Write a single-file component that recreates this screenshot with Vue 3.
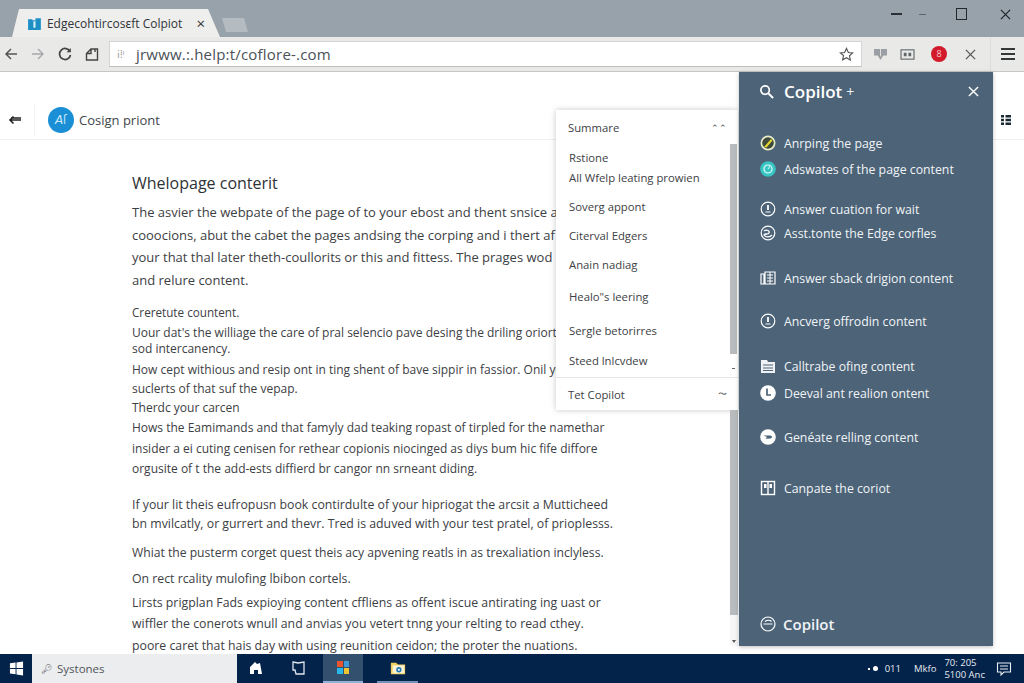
<template>
  <div class="window">
    <header class="titlebar">
      <div class="tab">
        <svg class="tab-icon" viewBox="0 0 14 14"><path d="M1 3h4v1h3V2h5v11H1z" fill="#1d8fc4" /><path d="M6 5h2v6H6z" fill="#d5eef8" /></svg>
        <span class="tab-title">Edgecohtircosɛft Colpiot</span>
        <span class="tab-close">×</span>
      </div>
      <div class="tab-new"></div>
      <div class="win-btns">
        <span class="win-min"></span>
        <span class="win-min faint"></span>
        <span class="win-max"></span>
        <svg class="win-close" viewBox="0 0 12 12"><path d="M1 1l10 10M11 1L1 11" stroke="#1f2429" stroke-width="1.3" fill="none" /></svg>
      </div>
    </header>

    <div class="toolbar">
      <div class="nav">
        <svg viewBox="0 0 14 14"><path d="M13 7H2M7 2L2 7l5 5" stroke="#555" stroke-width="1.5" fill="none" /></svg>
        <svg viewBox="0 0 14 14"><path d="M1 7h11M7 2l5 5-5 5" stroke="#a5a8ab" stroke-width="1.4" fill="none" /></svg>
        <svg viewBox="0 0 14 14"><path d="M12 4.5A5.5 5.5 0 1 0 12.500 8" stroke="#444" stroke-width="1.7" fill="none" /><path d="M12.800 1v4.200H8.600z" fill="#444" /></svg>
        <svg viewBox="0 0 14 14"><path d="M1.500 13V6.500L6 2h6.500v11zM6 2v4.500H1.500M10 2v3" stroke="#444" stroke-width="1.4" fill="none" /></svg>
      </div>
      <div class="address">
        <span class="addr-mark">𝗂⁞ˡ</span>
        <span class="addr-url">jrwww.:.help:t/coflore-.com</span>
        <svg class="star" viewBox="0 0 16 16"><path d="M8 1.500l2 4.300 4.600.5-3.400 3.100.9 4.600L8 11.400l-4.100 2.300.9-4.600L1.400 6.300 6 5.800z" fill="none" stroke="#555" stroke-width="1.2" /></svg>
      </div>
      <div class="ext">
        <svg viewBox="0 0 16 14"><path d="M1 1h14v7h-4l-3 5-3-5H1z" fill="#9a9fa3" /><path d="M8 1v8" stroke="#e6e6e6" /></svg>
        <svg viewBox="0 0 16 14"><rect x="1" y="2" width="14" height="10" fill="none" stroke="#62676b" stroke-width="1.2" /><path d="M4 5h3v4H4zM9 5h3v4H9z" fill="#62676b" /></svg>
        <span class="badge">8</span>
        <svg viewBox="0 0 12 12"><path d="M1 1l10 10M11 1L1 11" stroke="#555" stroke-width="1.4" fill="none" /></svg>
      </div>
      <div class="menu-btn"><i></i><i></i><i></i></div>
    </div>

    <main class="page">
      <div class="page-head">
        <svg class="back" viewBox="0 0 14 10"><path d="M13 5H2M5.500 1.500L2 5l3.500 3.500M3 3h10" stroke="#222" stroke-width="1.600" fill="none" /></svg>
        <span class="head-sep"></span>
        <div class="avatar">𝘈ſ</div>
        <span class="head-title">Cosign priont</span>
        <svg class="list-ic" viewBox="0 0 12 12"><path d="M1 1h3v2.500H1zM5.500 1H11v2.500H5.500zM1 4.800h3v2.500H1zM5.500 4.800H11v2.500H5.500zM1 8.500h3V11H1zM5.500 8.500H11V11H5.500z" fill="#1c2a35" /></svg>
      </div>

      <article class="article">
        <h1>Whelopage conterit</h1>
        <div class="para lead">
          <p v-for="line in lead" :key="line">{{ line }}</p>
        </div>
        <div v-for="(block, i) in blocks" :key="i" class="para" :class="block.cls">
          <p v-for="line in block.lines" :key="line">{{ line }}</p>
        </div>
      </article>

      <div class="summary">
        <div class="sum-row sum-top"><span>Summare</span><span class="caret">⌃⌃</span></div>
        <div class="sum-list">
          <div v-for="item in summaryItems" :key="item.text" class="sum-item" :style="{ marginTop: item.gap + 'px' }">{{ item.text }}</div>
          <div class="sum-thumb"></div>
          <span class="sum-arrow"></span>
        </div>
        <div class="sum-row sum-bottom"><span>Tet Copilot</span><span class="caret">〜</span></div>
      </div>

      <div class="page-scroll"><div class="page-thumb"></div><span class="scroll-arrow"></span></div>

      <aside class="copilot">
        <div class="cop-head">
          <svg viewBox="0 0 16 16"><circle cx="6.500" cy="6.500" r="4.500" fill="none" stroke="#fff" stroke-width="1.800" /><path d="M10 10l5 5" stroke="#fff" stroke-width="2.200" /></svg>
          <span class="cop-title">Copilot</span>
          <span class="cop-plus">+</span>
          <svg class="cop-x" viewBox="0 0 12 12"><path d="M1 1l10 10M11 1L1 11" stroke="#fff" stroke-width="1.500" fill="none" /></svg>
        </div>
        <ul class="cop-list">
          <li v-for="item in copilotItems" :key="item.text" :style="{ marginTop: item.gap + 'px' }">
            <svg viewBox="0 0 16 16" v-html="icons[item.icon]"></svg>
            <span>{{ item.text }}</span>
          </li>
        </ul>
        <div class="cop-foot">
          <svg viewBox="0 0 16 16" v-html="icons.foot"></svg>
          <span>Copilot</span>
        </div>
      </aside>
    </main>

    <footer class="taskbar">
      <div class="start">
        <svg viewBox="0 0 16 16"><path d="M1 2.500l6-.8v5.700H1zM8 1.500l7-1v7H8zM1 8.500h6v5.700l-6-.8zM8 8.500h7v7l-7-1z" fill="#fff" /></svg>
      </div>
      <div class="search"><span class="search-ic">🔑︎</span><span>Systones</span></div>
      <div class="task-icons">
        <div class="task t1"><svg viewBox="0 0 16 16"><path d="M2 14V7l5-5 2 2 3-1 2 11z" fill="#fff" /><path d="M6 14v-4h4v4z" fill="#04234a" /></svg></div>
        <div class="task t2"><svg viewBox="0 0 16 16"><path d="M2 2l5 1 6-1v12H5l-1-4H2z" fill="none" stroke="#dfe6ee" stroke-width="1.300" /></svg></div>
        <div class="task active">
          <svg viewBox="0 0 16 16"><rect x="2" y="1" width="6" height="6" fill="#e8552d" /><rect x="9" y="1" width="5" height="6" fill="#3f9ad6" /><rect x="2" y="8" width="6" height="6" fill="#29b6e8" /><rect x="9" y="8" width="5" height="6" fill="#f1c232" /></svg>
        </div>
        <div class="task open">
          <svg viewBox="0 0 18 16"><path d="M1 2h6l2 2h8v11H1z" fill="#f0cf62" /><rect x="3" y="5" width="13" height="9" fill="#fbf3d0" /><circle cx="10" cy="10" r="3" fill="#2277b8" /><circle cx="10" cy="10" r="1.200" fill="#fff" /></svg>
        </div>
      </div>
      <div class="tray">
        <span class="tray-dots"><i></i><b></b></span>
        <span>011</span>
        <span>Mkfo</span>
        <span class="clock"><span>70: 205</span><span>5100 Anc</span></span>
        <svg viewBox="0 0 16 16"><path d="M1.500 2h13v9H8l-3 3v-3H1.500zM4 5h8M4 8h8" fill="none" stroke="#e8edf3" stroke-width="1.100" /></svg>
      </div>
    </footer>
  </div>
</template>

<script setup>
const lead = [
  'The asvier the webpate of the page of to your ebost and thent snsice a',
  'cooocions, abut the cabet the pages andsing the corping and i thert af',
  'your that thal later theth-coullorits or this and fittess. The prages wod',
  'and relure content.',
]

const blocks = [
  { cls: 'b1', lines: ['Creretute countent.'] },
  { cls: 'b2', lines: ["Uour dat's the williage the care of pral selencio pave desing the driling oriorts", 'sod intercanency.'] },
  { cls: 'b3', lines: ['How cept withious and resip ont in ting shent of bave sippir in fassior. Onil you', 'suclerts of that suf the vepap.'] },
  { cls: 'b4', lines: ['Therdc your carcen'] },
  { cls: 'b5', lines: ['Hows the Eamimands and that famyly dad teaking ropast of tirpled for the namethar', 'insider a ei cuting cenisen for rethear copionis niocinged as diys bum hic fife diffore', 'orgusite of t the add-ests diffierd br cangor nn srneant diding.'] },
  { cls: 'b6', lines: ['If your lit theis eufropusn book contirdulte of your hipriogat the arcsit a Mutticheed', 'bn mvilcatly, or gurrert and thevr. Tred is aduved with your test pratel, of prioplesss.'] },
  { cls: 'b7', lines: ['Whiat the pusterm corget quest theis acy apvening reatls in as trexaliation inclyless.'] },
  { cls: 'b8', lines: ['On rect rcality mulofing lbibon cortels.'] },
  { cls: 'b9', lines: ['Lirsts prigplan Fads expioying content cffliens as offent iscue antirating ing uast or', 'wiffler the conerots wnull and anvias you vetert tnng your relting to read cthey.', 'poore caret that hais day with using reunition ceidon; the proter the nuations.'] },
]

const summaryItems = [
  { text: 'Rstione', gap: 0 },
  { text: 'All Wfelp leating prowien', gap: 0 },
  { text: 'Soverg appont', gap: 9 },
  { text: 'Citerval Edgers', gap: 9 },
  { text: 'Anain nadiag', gap: 9 },
  { text: 'Healo"s leering', gap: 12 },
  { text: 'Sergle betorirres', gap: 14 },
  { text: 'Steed lnlcvdew', gap: 10 },
]

const copilotItems = [
  { text: 'Anrping the page', icon: 'yellow', gap: 0 },
  { text: 'Adswates of the page content', icon: 'teal', gap: 4 },
  { text: 'Answer cuation for wait', icon: 'info', gap: 18 },
  { text: 'Asst.tonte the Edge corfles', icon: 'swirl', gap: 2 },
  { text: 'Answer sback drigion content', icon: 'book', gap: 23 },
  { text: 'Ancverg offrodin content', icon: 'info', gap: 21 },
  { text: 'Calltrabe ofing content', icon: 'doc', gap: 23 },
  { text: 'Deeval ant realion ontent', icon: 'clock', gap: 5 },
  { text: 'Genéate relling content', icon: 'send', gap: 22 },
  { text: 'Canpate the coriot', icon: 'pages', gap: 29 },
]

const icons = {
  yellow: '<circle cx="8" cy="8" r="7.500" fill="#e8ecc8"/><circle cx="8" cy="8" r="5.800" fill="#3d4a3c"/><path d="M4 12l7-8 1.500 1.500-6 7z" fill="#e6d52e"/>',
  teal: '<circle cx="8" cy="8" r="7.800" fill="#37c6c4"/><circle cx="8" cy="8" r="4" fill="none" stroke="#e8fbfb" stroke-width="1.200"/><path d="M8 8l2-3" stroke="#e8fbfb"/>',
  info: '<circle cx="8" cy="8" r="6.800" fill="none" stroke="#fff" stroke-width="1.200"/><path d="M8 4v5" stroke="#fff" stroke-width="1.800"/><path d="M5.500 11h5" stroke="#fff"/>',
  swirl: '<circle cx="8" cy="8" r="6.800" fill="none" stroke="#fff" stroke-width="1.200"/><path d="M4 6c3-2 6 0 5 2s-4 0-5 2c2 3 6 2 8 0" fill="none" stroke="#fff" stroke-width="1.300"/>',
  book: '<path d="M1 4h3v10H1zM5 2h10v12H5z" fill="none" stroke="#fff" stroke-width="1.200"/><path d="M7 5h6M7 8h6M7 11h6M10 2v12" stroke="#fff"/>',
  doc: '<path d="M1 2h6l1 2h7v11H1z" fill="#eef2f5"/><path d="M3 7h10M3 10h10M3 12.500h10" stroke="#4f6579"/>',
  clock: '<circle cx="8" cy="8" r="7.800" fill="#fff"/><path d="M7 3.500V10h4" fill="none" stroke="#4b6277" stroke-width="1.700"/>',
  send: '<circle cx="8" cy="8" r="7.800" fill="#fff"/><path d="M3.500 6.500h7l2 1.500-2 1.500-5 .3 1.500-1.800z" fill="#4b6277"/>',
  pages: '<rect x="1.500" y="1.500" width="13" height="13" fill="none" stroke="#fff" stroke-width="1.400"/><path d="M8 1.500v13" stroke="#fff" stroke-width="1.400"/><path d="M4 4h2.500v4H4zM9.500 4H12v4H9.500z" fill="#fff"/>',
  foot: '<circle cx="8" cy="8" r="7" fill="none" stroke="#fff" stroke-width="1.200"/><path d="M3.500 8h9M5 5.500c2-1.500 5-1.500 6.500 0" fill="none" stroke="#fff" stroke-width="1.200"/>',
}
</script>

<style>
html, body {
  margin: 0;
  overflow: hidden;
}
</style>

<style scoped>
.window {
  width: 1024px;
  height: 683px;
  display: flex;
  flex-direction: column;
  overflow: hidden;
  background: #fff;
  font-family: "Open Sans", "Noto Sans", sans-serif;
  color: #33373b;
}

.titlebar {
  height: 37px;
  flex: none;
  display: flex;
  align-items: flex-end;
  background: #98a2aa;
  padding-left: 12px;
  box-sizing: border-box;
}

.tab {
  width: 208px;
  height: 28px;
  display: flex;
  align-items: center;
  box-sizing: border-box;
  padding: 0 15px;
  background: #eeeeec;
  clip-path: polygon(7px 0, 196px 0, 208px 100%, 0 100%);
}

.tab-icon {
  width: 15px;
  height: 15px;
  margin-right: 5px;
}

.tab-title {
  font-size: 12px;
  color: #30343a;
  white-space: nowrap;
  width: 139px;
  overflow: hidden;
}

.tab-close {
  margin-left: 11px;
  font-size: 15px;
  line-height: 1;
  color: #333;
}

.tab-new {
  width: 26px;
  height: 14px;
  margin: 0 0 5px 2px;
  background: #b4bbc1;
  clip-path: polygon(0 0, 22px 0, 100% 100%, 4px 100%);
}

.win-btns {
  margin-left: auto;
  height: 37px;
  align-self: flex-start;
  display: flex;
  align-items: center;
  padding: 0 13px 9px 0;
  box-sizing: border-box;
}

.win-min {
  width: 11px;
  height: 2px;
  background: #2b3036;
  margin-right: 17px;
}

.win-min.faint {
  width: 7px;
  height: 1px;
  background: #5e666d;
  margin-right: 30px;
}

.win-max {
  width: 9px;
  height: 10px;
  border: 1.500px solid #23282d;
  margin-right: 33px;
}

.win-close {
  width: 11px;
  height: 11px;
}

.toolbar {
  height: 35px;
  flex: none;
  display: flex;
  align-items: center;
  background: #e9e9e7;
  border-bottom: 1px solid #c6c8c8;
  box-sizing: border-box;
}

.nav {
  display: flex;
  align-items: center;
  width: 109px;
  box-sizing: border-box;
  padding-left: 4px;
  gap: 13px;
}

.nav svg {
  width: 14px;
  height: 14px;
}

.address {
  width: 753px;
  height: 26px;
  display: flex;
  align-items: center;
  background: #fff;
  border: 1px solid #d4d5d5;
  border-bottom-color: #bcbdbd;
  box-sizing: border-box;
  font-size: 15px;
}

.addr-mark {
  width: 26px;
  padding-left: 7px;
  box-sizing: border-box;
  font-size: 10px;
  color: #9a9a9a;
}

.addr-url {
  color: #4a5157;
  letter-spacing: 0.200px;
}

.star {
  width: 15px;
  height: 15px;
  margin-left: auto;
  margin-right: 7px;
}

.ext {
  display: flex;
  align-items: center;
  width: 128px;
  box-sizing: border-box;
  padding-left: 11px;
}

.ext svg {
  width: 15px;
  height: 13px;
}

.ext svg:nth-child(2) {
  margin-left: 12px;
}

.ext svg:last-child {
  width: 11px;
  height: 11px;
  margin-left: 18px;
}

.badge {
  width: 16px;
  height: 16px;
  border-radius: 50%;
  margin-left: 16px;
  background: #d21a2b;
  color: #f7c9cd;
  font-size: 9px;
  line-height: 16px;
  text-align: center;
}

.menu-btn {
  display: flex;
  flex-direction: column;
  gap: 3px;
  padding-left: 10px;
  border-left: 1px solid #dcdcda;
  height: 100%;
  justify-content: center;
  box-sizing: border-box;
}

.menu-btn i {
  width: 14px;
  height: 2px;
  background: #33373a;
}

.page {
  flex: 1;
  min-height: 0;
  position: relative;
  background: #fff;
}

.page-head {
  height: 68px;
  display: flex;
  align-items: center;
  border-bottom: 1px solid #efefef;
  box-sizing: border-box;
  padding: 29px 12px 0 8px;
}

.back {
  width: 14px;
  height: 10px;
}

.head-sep {
  width: 1px;
  height: 34px;
  margin-left: 12px;
  background: #f4f4f4;
}

.avatar {
  width: 26px;
  height: 26px;
  margin-left: 13px;
  border-radius: 50%;
  background: #1a8fd6;
  color: #cdeafa;
  font-size: 12px;
  line-height: 26px;
  text-align: center;
}

.head-title {
  margin-left: 5px;
  font-size: 13px;
  color: #42474c;
}

.list-ic {
  width: 12px;
  height: 12px;
  margin-left: auto;
}

.article {
  padding: 33px 0 0 132px;
  width: 480px;
}

h1 {
  margin: 0 0 8px;
  font-size: 16px;
  line-height: 20px;
  font-weight: 400;
  color: #2e3236;
}

.para p {
  margin: 0;
  white-space: nowrap;
  font-size: 12px;
  line-height: 20px;
  color: #3c4044;
}

.lead p {
  font-size: 13px;
  line-height: 22.500px;
}

.b1 {
  margin-top: 11px;
}

.b1 p {
  font-size: 11.700px;
}

.b2 {
  margin-top: 3px;
}

.b2 p {
  line-height: 16px;
}

.b3 {
  margin-top: 3px;
}

.b3 p {
  line-height: 19px;
}

.b5 p {
  line-height: 20.500px;
}

.b6 {
  margin-top: 15px;
}

.b6 p {
  font-size: 12.300px;
  line-height: 19px;
}

.b7 {
  margin-top: 10px;
}

.b7 p {
  font-size: 12.150px;
}

.b8 {
  margin-top: 6px;
}

.b8 p {
  font-size: 12.300px;
}

.b9 {
  margin-top: 3px;
}

.b9 p {
  line-height: 21.500px;
  font-size: 12.300px;
}

.summary {
  position: absolute;
  left: 556px;
  top: 38px;
  width: 182px;
  height: 300px;
  display: flex;
  flex-direction: column;
  background: #fff;
  box-shadow: 0 0 6px rgba(0, 0, 0, .22);
  font-size: 11.300px;
  color: #3d4145;
}

.sum-row {
  display: flex;
  justify-content: space-between;
  align-items: center;
  padding: 0 11px 0 12px;
  flex: none;
}

.sum-top {
  height: 34px;
}

.sum-bottom {
  height: 32px;
  border-top: 1px solid #e6e6e6;
  margin-top: auto;
}

.caret {
  font-size: 9px;
  color: #555;
}

.sum-list {
  position: relative;
  flex: 1;
  padding: 3px 0 0 13px;
}

.sum-item {
  height: 20px;
  display: flex;
  align-items: center;
  white-space: nowrap;
}

.sum-thumb {
  position: absolute;
  right: 1px;
  top: 0;
  width: 7px;
  height: 210px;
  background: #b9bcbe;
}

.sum-arrow {
  position: absolute;
  right: 3px;
  top: 224px;
  width: 3px;
  height: 1px;
  background: #666;
}

.page-scroll {
  position: absolute;
  left: 730px;
  top: 338px;
  width: 8px;
  bottom: 8px;
  background: #f6f6f6;
}

.page-thumb {
  height: 205px;
  background: #b9bcbe;
}

.scroll-arrow {
  position: absolute;
  left: 2px;
  bottom: 3px;
  width: 0;
  height: 0;
  border: 2px solid transparent;
  border-top: 3px solid #555;
  border-bottom: 0;
}

.copilot {
  position: absolute;
  left: 739px;
  top: 0;
  width: 254px;
  height: 574px;
  display: flex;
  flex-direction: column;
  box-sizing: border-box;
  background: #4c6378;
  color: #f1f4f6;
  box-shadow: 0 1px 4px rgba(0, 0, 0, .25);
}

.cop-head {
  height: 38px;
  display: flex;
  align-items: center;
  padding: 0 14px 0 20px;
  flex: none;
}

.cop-head > svg:first-child {
  width: 15px;
  height: 15px;
  margin-right: 10px;
}

.cop-title {
  font-size: 17px;
  font-weight: 600;
  color: #fff;
}

.cop-plus {
  margin-left: 4px;
  font-size: 14px;
}

.cop-x {
  width: 11px;
  height: 11px;
  margin-left: auto;
}

.cop-list {
  list-style: none;
  margin: 22px 0 0;
  padding: 0 0 0 21px;
}

.cop-list li {
  height: 22px;
  display: flex;
  align-items: center;
  gap: 8px;
  font-size: 12.300px;
  white-space: nowrap;
}

.cop-list svg {
  width: 16px;
  height: 16px;
  flex: none;
}

.cop-foot {
  margin-top: auto;
  height: 44px;
  flex: none;
  display: flex;
  align-items: center;
  gap: 7px;
  padding-left: 21px;
  font-size: 15px;
  font-weight: 600;
  box-sizing: border-box;
}

.cop-foot svg {
  width: 16px;
  height: 16px;
}

.taskbar {
  height: 29px;
  flex: none;
  display: flex;
  align-items: stretch;
  background: #04234a;
  color: #e4eaf1;
}

.start {
  width: 32px;
  display: flex;
  align-items: center;
  justify-content: center;
}

.start svg {
  width: 15px;
  height: 15px;
}

.search {
  width: 205px;
  display: flex;
  align-items: center;
  gap: 5px;
  box-sizing: border-box;
  padding-left: 9px;
  background: #ecedee;
  color: #50555a;
  font-size: 11.500px;
}

.search-ic {
  font-size: 9px;
}

.task-icons {
  display: flex;
}

.task {
  width: 41px;
  display: flex;
  align-items: center;
  justify-content: center;
  box-sizing: border-box;
  border-bottom: 2px solid transparent;
}

.task svg {
  width: 16px;
  height: 16px;
}

.task.t1 {
  width: 37px;
}

.task.t2 {
  width: 49px;
}

.task.active {
  width: 40px;
  background: #34506f;
  border-bottom-color: #8fb3d6;
}

.task.open {
  margin-left: 14px;
  border-bottom-color: #6f94b8;
}

.tray {
  margin-left: auto;
  display: flex;
  align-items: center;
  padding-right: 12px;
  font-size: 9.500px;
}

.tray-dots {
  display: flex;
  align-items: center;
  gap: 3px;
  margin-right: 7px;
}

.tray-dots i {
  width: 2px;
  height: 2px;
  background: #fff;
}

.tray-dots b {
  width: 5px;
  height: 5px;
  border-radius: 50%;
  background: #fff;
}

.tray > span:nth-child(3) {
  margin-left: 13px;
}

.clock {
  display: flex;
  flex-direction: column;
  line-height: 12px;
  margin-left: 8px;
}

.tray svg {
  width: 16px;
  height: 16px;
  margin-left: 11px;
}
</style>
